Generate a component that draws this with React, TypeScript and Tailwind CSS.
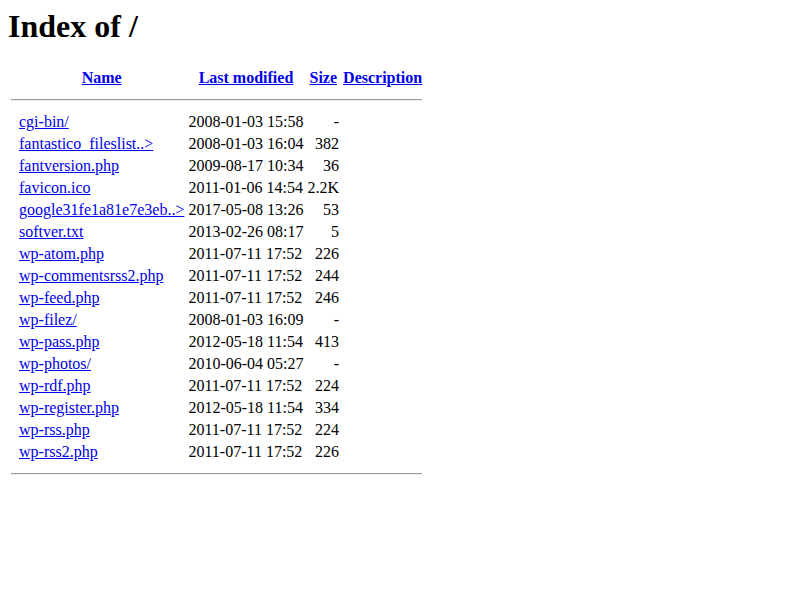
const files: [string, string, string][] = [
  ['cgi-bin/', '2008-01-03 15:58', '-'],
  ['fantastico_fileslist..>', '2008-01-03 16:04', '382'],
  ['fantversion.php', '2009-08-17 10:34', '36'],
  ['favicon.ico', '2011-01-06 14:54', '2.2K'],
  ['google31fe1a81e7e3eb..>', '2017-05-08 13:26', '53'],
  ['softver.txt', '2013-02-26 08:17', '5'],
  ['wp-atom.php', '2011-07-11 17:52', '226'],
  ['wp-commentsrss2.php', '2011-07-11 17:52', '244'],
  ['wp-feed.php', '2011-07-11 17:52', '246'],
  ['wp-filez/', '2008-01-03 16:09', '-'],
  ['wp-pass.php', '2012-05-18 11:54', '413'],
  ['wp-photos/', '2010-06-04 05:27', '-'],
  ['wp-rdf.php', '2011-07-11 17:52', '224'],
  ['wp-register.php', '2012-05-18 11:54', '334'],
  ['wp-rss.php', '2011-07-11 17:52', '224'],
  ['wp-rss2.php', '2011-07-11 17:52', '226'],
]

function Rule() {
  return (
    <tr>
      <th colSpan={5} className="p-px">
        <hr className="my-2 h-0 border-t border-b border-t-[#9a9a9a] border-b-[#eeeeee]" />
      </th>
    </tr>
  )
}

export default function App() {
  return (
    <div className="min-h-[600px] bg-white px-2 pt-2 text-black text-[16px] font-['Liberation_Serif',serif]">
      <h1 className="m-0 mb-[22px] text-[32px] font-bold leading-[36px]">Index of /</h1>
      <table className="border-separate border-spacing-[2px] leading-[18px]">
        <tbody>
          <tr>
            <th className="p-px w-[6px]"></th>
            <th className="p-px w-[166px]"><a href="#" className="text-[#0000ee] underline">Name</a></th>
            <th className="p-px w-[114px]"><a href="#" className="text-[#0000ee] underline">Last modified</a></th>
            <th className="p-px w-[32px]"><a href="#" className="text-[#0000ee] underline">Size</a></th>
            <th className="p-px w-[78px]"><a href="#" className="text-[#0000ee] underline">Description</a></th>
          </tr>
          <Rule />
          {files.map(([name, date, size]) => (
            <tr key={name}>
              <td className="p-px"></td>
              <td className="p-px whitespace-nowrap"><a href="#" className="text-[#0000ee] underline">{name}</a></td>
              <td className="p-px whitespace-nowrap">{date}</td>
              <td className="p-px text-right">{size}</td>
              <td className="p-px"></td>
            </tr>
          ))}
          <Rule />
        </tbody>
      </table>
    </div>
  )
}
